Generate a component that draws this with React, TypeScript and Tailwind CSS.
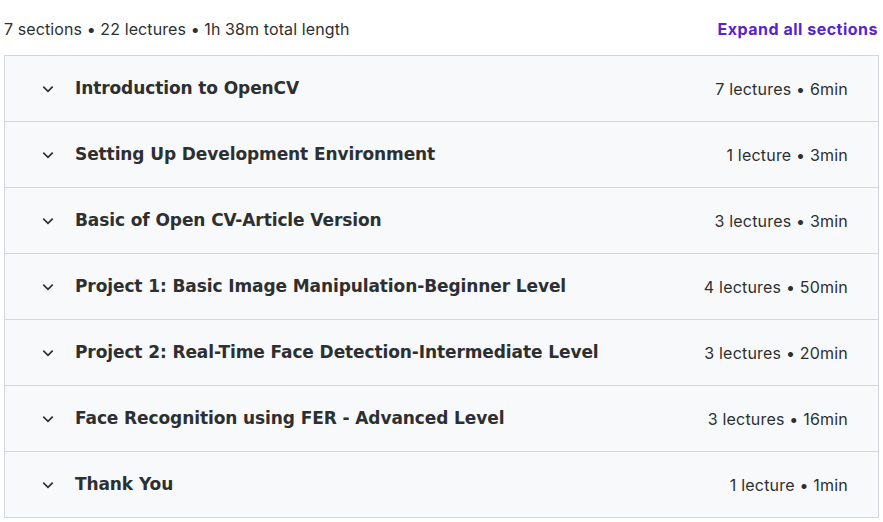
import React from "react";

const sections = [
  { title: "Introduction to OpenCV", meta: "7 lectures • 6min" },
  { title: "Setting Up Development Environment", meta: "1 lecture • 3min" },
  { title: "Basic of Open CV-Article Version", meta: "3 lectures • 3min" },
  { title: "Project 1: Basic Image Manipulation-Beginner Level", meta: "4 lectures • 50min" },
  { title: "Project 2: Real-Time Face Detection-Intermediate Level", meta: "3 lectures • 20min" },
  { title: "Face Recognition using FER - Advanced Level", meta: "3 lectures • 16min" },
  { title: "Thank You", meta: "1 lecture • 1min" },
];

function Chevron() {
  return (
    <svg width="14" height="14" viewBox="0 0 24 24" fill="none" stroke="#2d2f31" strokeWidth="3" strokeLinecap="square">
      <path d="M5 9l7 7 7-7" />
    </svg>
  );
}

const bold = { fontFamily: "'DejaVu Sans', sans-serif" };

export default function App() {
  return (
    <div className="w-[883px] h-[522px] bg-white text-[#2d2f31]" style={{ fontFamily: "Inter, 'Noto Sans', sans-serif" }}>
      <div className="flex items-center justify-between h-[55px] pl-[4px] pr-[5px] pt-[3px]">
        <span className="text-[16px] tracking-[0.1px]">7 sections • 22 lectures • 1h 38m total length</span>
        <button className="text-[16px] font-bold tracking-[0.5px] text-[#5624d0]">Expand all sections</button>
      </div>
      <div className="ml-[4px] w-[875px] border border-[#d1d7dc] bg-[#f7f9fa]">
        {sections.map((s, i) => (
          <div
            key={i}
            className={
              i > 0
                ? "flex items-center h-[66px] pl-[36px] pr-[30px] border-t border-[#d1d7dc]"
                : "flex items-center h-[65px] pl-[36px] pr-[30px]"
            }
          >
            <span className="w-[34px] flex items-center"><Chevron /></span>
            <span className="flex-1 pt-[1px] text-[17px] font-bold tracking-[-0.1px]" style={bold}>{s.title}</span>
            <span className="text-[16px] tracking-[0.2px]">{s.meta}</span>
          </div>
        ))}
      </div>
    </div>
  );
}
